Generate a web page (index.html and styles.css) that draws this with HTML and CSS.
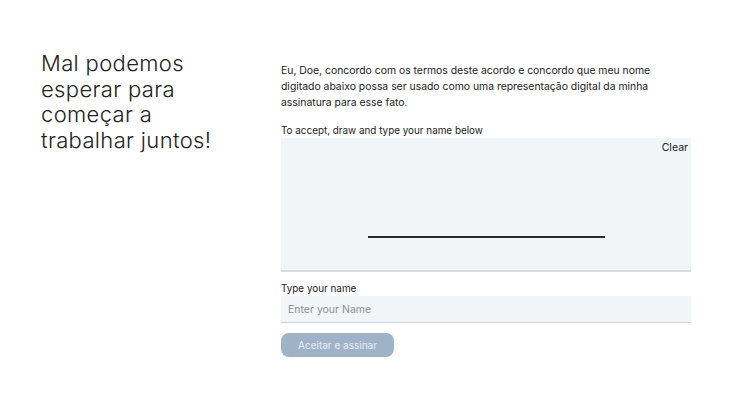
FILE: index.html
```html
<!DOCTYPE html>
<html lang="pt">
<head>
    <meta charset="UTF-8">
    <meta name="viewport" content="width=device-width, initial-scale=1.0">
    <title>Assinatura</title>
    <link rel="stylesheet" href="styles.css">
</head>
<body>
    <main class="page">
        <div class="intro">
            <h1>Mal podemos esperar para começar a trabalhar juntos!</h1>
        </div>
        <form class="sign-form">
            <p class="terms">Eu, Doe, concordo com os termos deste acordo e concordo que meu nome digitado abaixo possa ser usado como uma representação digital da minha assinatura para esse fato.</p>
            <label class="field-label">To accept, draw and type your name below</label>
            <div class="pad">
                <button type="button" class="clear">Clear</button>
                <div class="sign-line"></div>
            </div>
            <label class="field-label" for="name">Type your name</label>
            <input type="text" id="name" class="name-input" placeholder="Enter your Name">
            <button type="button" class="submit">Aceitar e assinar</button>
        </form>
    </main>
</body>
</html>
```

FILE: styles.css
```css
body {
    margin: 0;
    background-color: #fff;
    color: #1f1f1f;
    font-family: 'Inter', sans-serif;
}
.page {
    display: flex;
    padding: 51px 0 0 41px;
}
.intro {
    width: 240px;
}
h1 {
    margin: 0;
    font-size: 22px;
    line-height: 25.5px;
    font-weight: 300;
    letter-spacing: 0.35px;
    color: #222;
    width: 200px;
}
.sign-form {
    width: 410px;
    padding-top: 12px;
}
.terms {
    margin: 0 0 13px;
    font-size: 10.4px;
    line-height: 16px;
    color: #222;
}
.field-label {
    display: block;
    font-size: 9.9px;
    line-height: 12px;
    color: #222;
    margin-bottom: 2px;
}
.pad {
    position: relative;
    height: 132px;
    background-color: #f2f5f8;
    border-bottom: 2px solid #d9dde2;
    display: flex;
    justify-content: center;
    margin-bottom: 10px;
}
.clear {
    position: absolute;
    top: 3px;
    right: 3px;
    border: none;
    background: none;
    font-family: inherit;
    font-size: 10.5px;
    color: #222;
    padding: 0;
}
.sign-line {
    width: 237px;
    height: 2px;
    background-color: #2a2a2a;
    margin-top: 98px;
}
.name-input {
    display: block;
    box-sizing: border-box;
    width: 100%;
    height: 27px;
    border: none;
    border-bottom: 1px solid #cfd4d9;
    background-color: #f2f5f8;
    padding: 0 7px;
    font-family: inherit;
    font-size: 10.5px;
    margin: 0 0 10px;
}
.name-input::placeholder {
    color: #8a8f96;
}
.submit {
    display: block;
    background-color: #9fb3c8;
    color: #e9eef4;
    border: none;
    border-radius: 8px;
    width: 113px;
    height: 24px;
    font-family: inherit;
    font-size: 10px;
    padding: 0;
}
```
